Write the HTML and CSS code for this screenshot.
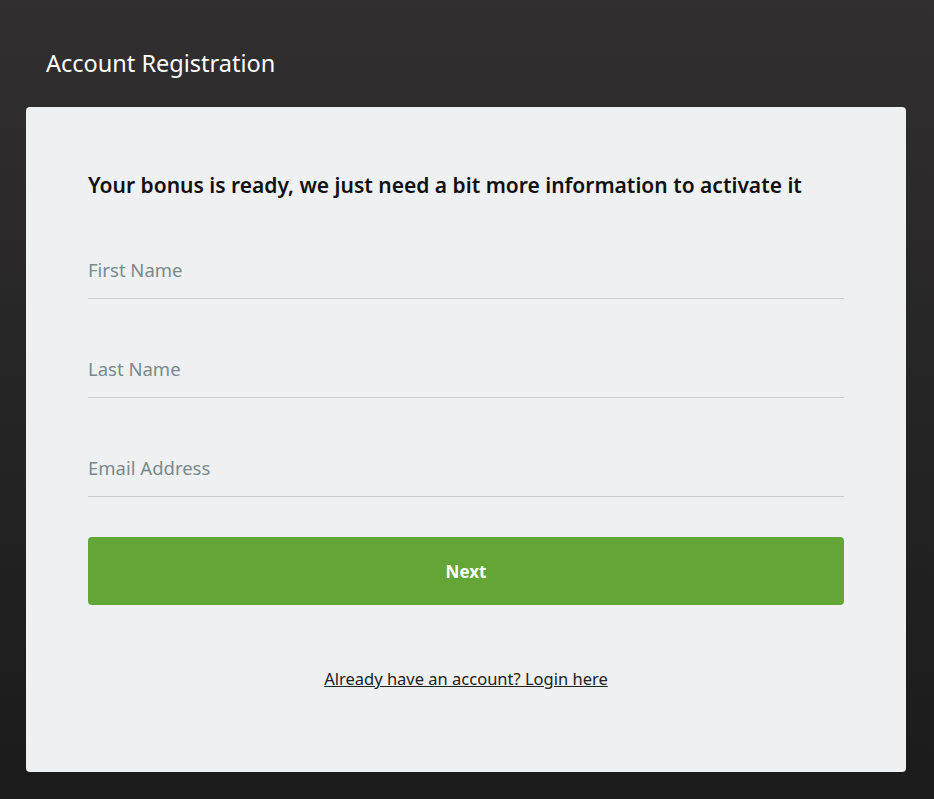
FILE: index.html
```html
<!DOCTYPE html>
<html lang="en">
<head>
    <meta charset="UTF-8">
    <meta name="viewport" content="width=device-width, initial-scale=1.0">
    <title>Account Registration</title>
    <link rel="stylesheet" href="styles.css">
</head>
<body>
    <h1 class="page-title">Account Registration</h1>
    <div class="card">
        <h2 class="card-title">Your bonus is ready, we just need a bit more information to activate it</h2>
        <form class="reg-form" onsubmit="return false">
            <input class="field" type="text" placeholder="First Name">
            <input class="field" type="text" placeholder="Last Name">
            <input class="field" type="email" placeholder="Email Address">
            <button class="next-button" type="submit">Next</button>
        </form>
        <p class="login-line"><a href="#">Already have an account? Login here</a></p>
    </div>
</body>
</html>
```

FILE: styles.css
```css
html {
    height: 100%;
}
body {
    font-family: "Noto Sans", "Open Sans", sans-serif;
    margin: 0;
    padding: 0 28px 27px 26px;
    min-height: 100%;
    box-sizing: border-box;
    background: linear-gradient(#312f30, #1b1b1b);
    color: #111;
}
.page-title {
    margin: 0;
    padding: 47px 20px 27px;
    font-size: 23.5px;
    font-weight: 400;
    line-height: 33px;
    color: #fff;
}
.card {
    background-color: #eef0f2;
    border-radius: 4px;
    padding: 64px 62px 81px;
}
.card-title {
    margin: 0;
    font-size: 21px;
    font-weight: 600;
    line-height: 28px;
}
.reg-form {
    display: flex;
    flex-direction: column;
    padding-top: 44px;
}
.field {
    font-family: inherit;
    font-size: 18.5px;
    line-height: 26px;
    color: #333;
    background: transparent;
    border: none;
    border-bottom: 1px solid #c8cbce;
    padding: 14px 0 15px;
    margin: 0 0 43px;
    outline: none;
}
.field::placeholder {
    color: #7a8a8c;
}
.field:last-of-type {
    margin-bottom: 40px;
}
.next-button {
    font-family: inherit;
    height: 68px;
    font-size: 17px;
    font-weight: 700;
    color: #fff;
    background-color: #63a537;
    border: none;
    border-radius: 4px;
    cursor: pointer;
}
.next-button:hover {
    background-color: #5a9a31;
}
.login-line {
    margin: 62px 0 0;
    text-align: center;
    font-size: 16.5px;
    line-height: 24px;
}
.login-line a {
    color: #222;
}
```
